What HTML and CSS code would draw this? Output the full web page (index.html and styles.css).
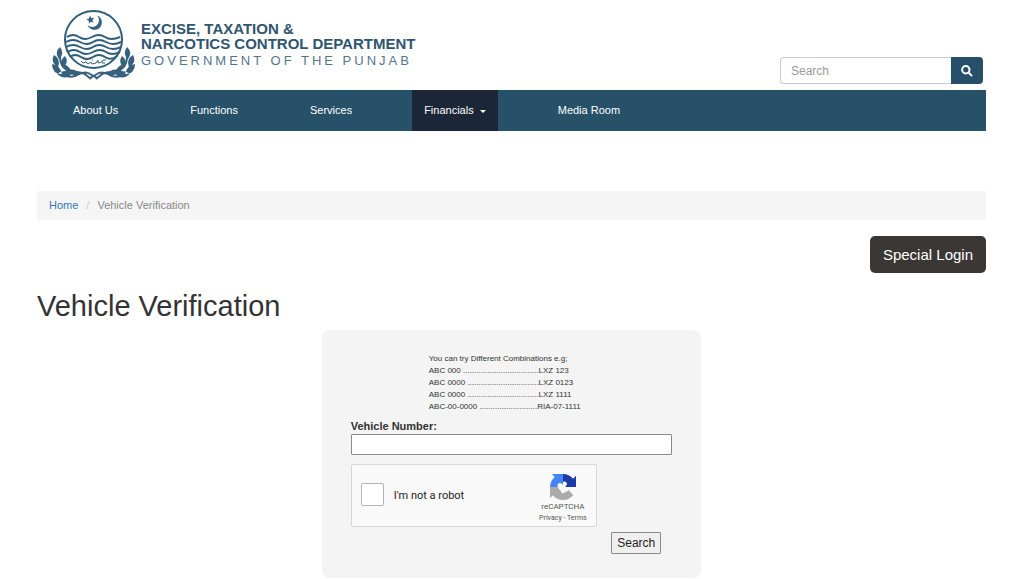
FILE: index.html
```html
<!DOCTYPE html>
<html lang="en">
<head>
<meta charset="utf-8">
<meta name="viewport" content="width=device-width, initial-scale=1">
<title>Vehicle Verification</title>
<link rel="stylesheet" href="styles.css">
</head>
<body>
<div class="container">
  <header class="header">
    <div class="brand">
      <svg class="emblem" viewBox="52 8 84 76" width="84" height="76" aria-hidden="true">
        <defs>
          <g id="wheat">
            <path d="M60 47q-6 5-1 12q6-5 1-12zM54 55q-4 7 4 12q3-8-4-12zM65 56q4 6-1 11q-6-5 1-11zM52 64q0 10 10 10q-2-9-10-10zM64 64q7 3 8 10q-8-1-8-10zM57 74q8-6 15 0q-7 7-15 0zM67 70q9-2 13 4q-7 4-13-4z"/>
            <path class="line" d="M60 56q0 15 15 16q7 0 11 3l5 4M66 76q8 2 13-2q7-3 11 0l7 4"/>
          </g>
        </defs>
        <circle class="ring" cx="93.500" cy="39.500" r="28.500"/>
        <path d="M97 15.500a7.400 7.400 0 1 1-9.500 9.500a6.300 6.300 0 1 0 9.500-9.500z"/>
        <path d="M90 15.500l1.300 2.500 2.800-.2-1.700 2.200 1.200 2.600-2.700-.9-2 2-.1-2.900-2.500-1.300 2.700-1z"/>
        <g class="waves">
          <path d="M67 37q6-4 12 0t13 0t13 0t15 0"/>
          <path d="M66 42q7-4 14 0t13 0t13 0t15 0"/>
          <path d="M66 47q7-4 14 0t13 0t13 0t15 0"/>
          <path d="M67 52q7-4 13 0t13 0t13 0t14 0"/>
          <path d="M70 57q5-4 11 0t12 0t12 0t12-1"/>
        </g>
        <path class="script" d="M81 61l2 2 3-1 2 2 3-2 1 2 4-1 2-3v3l4-1 1-2 3 0M85 60h1M92 60h1M102 63h3"/>
        <use href="#wheat"/>
        <use href="#wheat" transform="translate(187 0) scale(-1 1)"/>
      </svg>
      <div class="brand-text">
        <div class="brand-name">EXCISE, TAXATION &amp;<br>NARCOTICS CONTROL DEPARTMENT</div>
        <div class="brand-sub">GOVERNMENT OF THE PUNJAB</div>
      </div>
    </div>
    <form class="site-search" role="search">
      <input class="site-search-input" type="search" placeholder="Search" aria-label="Search">
      <button class="site-search-button" type="button" aria-label="Search">
        <svg viewBox="0 0 12 12" width="12" height="12" aria-hidden="true"><circle cx="4.800" cy="4.800" r="3.700"/><path d="M7.600 7.600L11 11"/></svg>
      </button>
    </form>
  </header>

  <nav class="nav">
    <a class="nav-link" href="#">About Us</a>
    <a class="nav-link" href="#">Functions</a>
    <a class="nav-link" href="#">Services</a>
    <a class="nav-link nav-active" href="#">Financials <span class="caret"></span></a>
    <a class="nav-link" href="#">Media Room</a>
  </nav>

  <nav class="breadcrumb" aria-label="Breadcrumb">
    <a href="#">Home</a><span class="slash">/</span><span>Vehicle Verification</span>
  </nav>

  <main>
    <div class="actions"><button class="login" type="button">Special Login</button></div>
    <h1 class="title">Vehicle Verification</h1>
    <form class="panel">
      <p class="hint">You can try Different Combinations e.g;<br>
        ABC 000 ..................................LXZ 123<br>
        ABC 0000 ................................LXZ 0123<br>
        ABC 0000 ................................LXZ 1111<br>
        ABC-00-0000 ..........................RIA-07-1111</p>
      <label class="label" for="vehicle">Vehicle Number:</label>
      <input class="field" id="vehicle" type="text">
      <div class="captcha">
        <input class="captcha-box" id="robot" type="checkbox">
        <label class="captcha-label" for="robot">I'm not a robot</label>
        <div class="captcha-brand">
          <svg viewBox="0 0 64 64" width="26" height="26" aria-hidden="true">
            <path fill="#1c3aa9" d="M64 32V4.600l-7.200 7.200C50.900 4.600 42 0 32 0v19q5-2 8 1q3 3 1 7q-1 2-4 5z"/>
            <path fill="#4285f4" d="M32 0H4.600l7.200 7.200C4.600 13.100 0 22 0 32h19q-2-5 1-8q3-3 7-1q3 1 5 4z"/>
            <path fill="#ababab" d="M0 32v27.400l7.200-7.200C13.100 59.400 22 64 32 64c10.300 0 19.500-4.900 25.300-12.500L45.500 39.600q-3 5-8 5q-3 4-8 2q-4-2-3-6q-5-1-7-8.600z"/>
          </svg>
          <span class="captcha-name">reCAPTCHA</span>
          <span class="captcha-links"><a href="#">Privacy</a> - <a href="#">Terms</a></span>
        </div>
      </div>
      <button class="submit" type="button">Search</button>
    </form>
  </main>
</div>
</body>
</html>
```
FILE: styles.css
```css
* { box-sizing: border-box; }
body {
  margin: 0;
  background: #fff;
  color: #333;
  font: 11px/16px "Liberation Sans", Arial, sans-serif;
}
a { text-decoration: none; }
button, input { font-family: inherit; }
.container { padding: 0 38px 0 37px; }

.header {
  display: flex;
  justify-content: space-between;
  align-items: flex-end;
  min-height: 90px;
  padding: 8px 3px 6px 15px;
}
.brand { display: flex; align-items: flex-start; gap: 5px; }
.emblem { display: block; fill: #35617d; }
.ring { fill: none; stroke: #2f5d7a; stroke-width: 2; }
.waves { fill: none; stroke: #2f5d7a; stroke-width: 2; }
.line { fill: none; stroke: #35617d; stroke-width: 2; }
.script { fill: none; stroke: #35617d; stroke-width: 1; }
.brand-text { padding-top: 13px; color: #2f5570; }
.brand-name { font-size: 15px; font-weight: 700; line-height: 15px; }
.brand-sub { font-size: 13px; line-height: 19px; letter-spacing: 3px; color: #54768c; }

.site-search { display: flex; width: 203px; }
.site-search-input {
  flex: 1;
  min-width: 0;
  height: 27px;
  padding: 0 10px;
  border: 1px solid #ccc;
  border-right: 0;
  border-radius: 4px 0 0 4px;
  font-size: 12px;
}
.site-search-input::placeholder { color: #999; }
.site-search-button {
  display: flex;
  align-items: center;
  justify-content: center;
  width: 32px;
  height: 27px;
  padding: 0;
  border: 0;
  border-radius: 0 4px 4px 0;
  background: #265069;
}
.site-search-button svg { fill: none; stroke: #fff; stroke-width: 2; }

.nav { display: flex; gap: 48px; padding: 0 24px; background: #275169; }
.nav-link { padding: 12px; line-height: 17px; color: #fff; }
.nav-active { background: #1b2738; }
.caret {
  display: inline-block;
  margin-left: 3px;
  vertical-align: middle;
  border: 3px solid transparent;
  border-top-color: #fff;
  border-bottom: 0;
}

.breadcrumb {
  display: flex;
  gap: 8px;
  margin-top: 60px;
  padding: 6px 12px 7px;
  background: #f5f5f5;
  color: #888;
}
.breadcrumb a { color: #337ab7; }
.slash { color: #ccc; }

.actions { display: flex; justify-content: flex-end; padding-top: 16px; }
.login {
  height: 37px;
  padding: 0 13px;
  border: 0;
  border-radius: 5px;
  background: #3a3734;
  color: #fff;
  font-size: 15px;
}
.title { margin: 17px 0 7px; font-size: 29px; font-weight: 400; line-height: 33px; }

.panel {
  display: flex;
  flex-direction: column;
  width: 40%;
  min-width: 320px;
  margin: 0 auto;
  padding: 23px 29px 24px;
  border-radius: 8px;
  background: #f4f4f4;
}
.hint { margin: 0 0 6px 78px; font-size: 8px; line-height: 12px; white-space: nowrap; }
.label { font-weight: 700; line-height: 15px; }
.field { width: 100%; height: 21px; border: 1px solid #8a8a8a; border-radius: 1px; background: #fff; }
.captcha {
  display: flex;
  align-items: center;
  width: 246px;
  height: 63px;
  margin: 9px 0 5px;
  padding: 0 9px;
  border: 1px solid #d6d6d6;
  border-radius: 2px;
  background: #f9f9f9;
}
.captcha-box {
  appearance: none;
  width: 23px;
  height: 23px;
  margin: 0 10px 3px 0;
  border: 1px solid #b4b4b4;
  border-radius: 2px;
  background: #fff;
}
.captcha-label { font: 11px/16px Roboto, sans-serif; color: #222; }
.captcha-brand {
  display: flex;
  flex-direction: column;
  align-items: center;
  margin-left: auto;
  padding-top: 6px;
  font-family: Roboto, sans-serif;
  color: #555;
}
.captcha-name { font-size: 8px; line-height: 14px; }
.captcha-links { font-size: 7px; line-height: 9px; }
.captcha-links a { color: #555; }
.submit {
  align-self: flex-end;
  height: 22px;
  margin-right: 11px;
  padding: 0 5px;
  border: 1px solid #8a8a8a;
  border-radius: 1px;
  background: #efefef;
  color: #222;
  font-size: 12px;
}
```
